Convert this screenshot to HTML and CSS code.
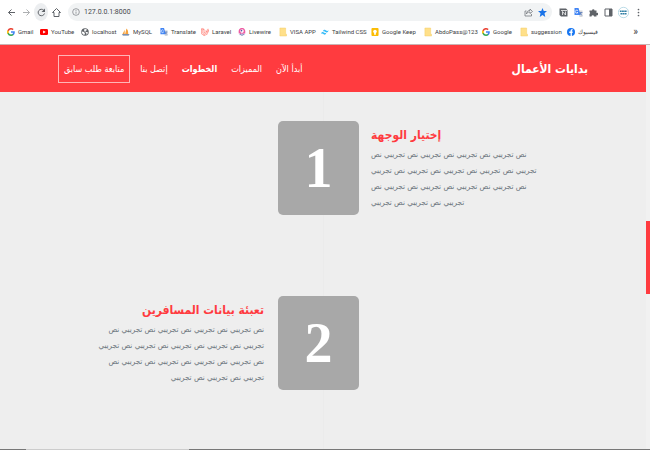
FILE: index.html
```html
<!DOCTYPE html>
<html lang="ar">
<head>
<meta charset="utf-8">
<title>بدايات الأعمال</title>
<link rel="stylesheet" href="styles.css">
</head>
<body>
<svg class="defs" aria-hidden="true">
  <symbol id="google" viewBox="0 0 18 18"><path fill="#4285f4" d="M17.6 9.2c0-.6-.1-1.200-.2-1.800H9v3.500h4.800a4.100 4.100 0 0 1-1.800 2.700v2.300h2.900c1.700-1.600 2.700-3.900 2.700-6.700z"/><path fill="#34a853" d="M9 18c2.400 0 4.500-.8 6-2.200l-3-2.300a5.400 5.400 0 0 1-8-2.800H1V13a9 9 0 0 0 8 5z"/><path fill="#fbbc05" d="M4 10.700a5.400 5.400 0 0 1 0-3.400V5H1a9 9 0 0 0 0 8z"/><path fill="#ea4335" d="M9 3.600c1.300 0 2.500.5 3.400 1.300L15 2.300A9 9 0 0 0 1 5l3 2.300a5.400 5.400 0 0 1 5-3.700z"/></symbol>
  <symbol id="folder" viewBox="0 0 18 18"><path fill="#ffe08a" stroke="#f3cb60" d="M2 0h13v14h2v4H2z"/></symbol>
  <symbol id="translate" viewBox="0 0 18 18"><path fill="#d5d8dc" d="M8 5h9v13h-6z"/><path fill="#4285f4" d="M1 0h8l4 14H1z"/><path fill="none" stroke="#fff" stroke-width="1.500" d="M8 5.500A3 3 0 1 0 8 9H6"/><path fill="none" stroke="#4a6fb5" stroke-width="1.300" d="M11 9h6M14 8v1c0 3-2 4-2 4m0-3 4 5"/></symbol>
</svg>
<header class="browser">
  <div class="toolbar">
    <button class="tool" aria-label="Back"><svg viewBox="0 0 18 18"><path class="line" d="M16 9H3m6-6L3 9l6 6"/></svg></button>
    <button class="tool faded" aria-label="Forward"><svg viewBox="0 0 18 18"><path class="line" d="M2 9h13M9 3l6 6-6 6"/></svg></button>
    <button class="tool reload" aria-label="Reload"><svg viewBox="0 0 18 18"><path class="line" d="M15 11a6.500 6.500 0 1 1-1.500-6.500L15 6"/><path d="M16 1v7H9z"/></svg></button>
    <button class="tool" aria-label="Home"><svg viewBox="0 0 18 18"><path class="line" d="M1 9l8-8 8 8h-3v8H4V9z"/></svg></button>
    <div class="address">
      <svg class="info" viewBox="0 0 18 18"><circle class="thin" cx="9" cy="9" r="7.500"/><path class="thin" d="M9 8v5M9 4.500v2"/></svg>
      <input class="url" aria-label="Address" value="127.0.0.1:8000" dir="ltr">
      <button class="tool" aria-label="Share"><svg viewBox="0 0 18 18"><path class="thin" d="M5 6H2v10h13v-4M5 12c0-5 3-7 7-7V2l5 5-5 4V8c-4 0-6 1-7 4z"/></svg></button>
      <button class="tool star" aria-label="Bookmark"><svg viewBox="0 0 18 18"><path d="M9 0l2.500 6H18l-5 4.500L14.500 18 9 14l-5.500 4L5 10.500 0 6h6.500z"/></svg></button>
    </div>
    <button class="tool ext" aria-label="Notion"><svg viewBox="0 0 18 18"><path d="M1 1h13l3 3v13H4l-3-3z"/><path fill="none" stroke="#fff" stroke-width="1.500" d="M4 5h12M7 14V7l6 7V7"/></svg></button>
    <button class="tool ext" aria-label="Translate"><svg><use href="#translate"/></svg></button>
    <button class="tool ext" aria-label="Extensions"><svg viewBox="0 0 18 18"><path d="M1 5h5a2.500 2.500 0 1 1 5 0h4v5a2.500 2.500 0 1 1 0 4v3h-5a2.500 2.500 0 0 0-5 0H1v-5a2.500 2.500 0 0 0 0-4z"/></svg></button>
    <button class="tool ext" aria-label="Side panel"><svg viewBox="0 0 18 18"><path fill="none" stroke="#5f6368" stroke-width="2" d="M2 2h14v14H2z"/><path d="M10 2h6v14h-6z"/></svg></button>
    <button class="tool ext profile" aria-label="Profile"><svg viewBox="0 0 18 18"><circle cx="9" cy="9" r="8.500" fill="#fff" stroke="#91c5d8"/><path fill="none" stroke="#2f7fa5" stroke-width="2.500" stroke-dasharray="3 .6" d="M3 7h12M4 11h10"/></svg></button>
    <button class="tool ext" aria-label="Menu"><svg viewBox="0 0 18 18"><circle cx="9" cy="3" r="1.700"/><circle cx="9" cy="9" r="1.700"/><circle cx="9" cy="15" r="1.700"/></svg></button>
  </div>
  <nav class="bookmarks" aria-label="Bookmarks">
    <a href="#"><svg><use href="#google"/></svg>Gmail</a>
    <a href="#"><svg viewBox="0 0 18 18"><rect y="2" width="18" height="14" rx="3" fill="#f00"/><path fill="#fff" d="M7 5.500l6 3.500-6 3.500z"/></svg>YouTube</a>
    <a href="#"><svg viewBox="0 0 18 18"><circle cx="9" cy="9" r="8.500" fill="#5f6368"/><path fill="#fff" d="M2 8l5 1 2 4-2 3c-4-2-5-5-5-8zm6-6l5 1-1 3-3 1 2 2 4 0c1 3-1 5-3 6l0-4-4-3-1-3z"/></svg>localhost</a>
    <a href="#"><svg viewBox="0 0 18 18"><path fill="#f6a13a" d="M1 14L6 4v10zm6 0L10 1c4 3 4 8 4 13z"/><path fill="#53719c" d="M0 14h17l-2 3H2z"/></svg>MySQL</a>
    <a href="#"><svg><use href="#translate"/></svg>Translate</a>
    <a href="#"><svg viewBox="0 0 18 18"><path fill="none" stroke="#ff6257" stroke-width="1.200" d="M1 2l3-1 3 2v8l7-4V4l2-2 2 2v4l-4 2v4l-7 3-6-4zm0 0l3 2 3-1M4 4v8l3 2 7-4m-7 4v3m3-11l4 2 4-3"/></svg>Laravel</a>
    <a href="#"><svg viewBox="0 0 18 18"><path fill="#ee5ba4" d="M2 13C0 3 4 0 9 0s9 4 7 13l-3-1-2 2-2-2-3 2-2-2z"/><circle cx="9" cy="7" r="4" fill="#fff"/><circle cx="8" cy="6" r="1.800" fill="#4e56a6"/><path stroke="#4e56a6" stroke-width="2" d="M5 13v3m4-3v5m4-5v3"/></svg>Livewire</a>
    <a href="#"><svg><use href="#folder"/></svg>VISA APP</a>
    <a href="#"><svg viewBox="0 0 18 18"><path fill="#38bdf8" d="M4 8c1-5 5-5 7-3 2 2 4 2 6 0-1 5-4 6-7 4-2-2-4-2-6-1zM0 13c1-5 4-5 7-3 2 2 3 2 5 0-1 5-4 6-6 4-2-2-4-2-6-1z"/></svg>Tailwind CSS</a>
    <a href="#"><svg viewBox="0 0 18 18"><rect x="1" width="16" height="18" rx="2" fill="#fbbc04"/><circle cx="9" cy="8" r="4" fill="#fff"/><path fill="#fff" d="M7 11h4v4H7z"/></svg>Google Keep</a>
    <a href="#"><svg><use href="#folder"/></svg>AbdoPass@123</a>
    <a href="#"><svg><use href="#google"/></svg>Google</a>
    <a href="#"><svg><use href="#folder"/></svg>suggession</a>
    <a href="#"><svg viewBox="0 0 18 18"><circle cx="9" cy="9" r="9" fill="#1877f2"/><path fill="#fff" d="M8 18v-7H5V8h3V6c0-3 2-4 5-3v2c-2 0-2 0-2 3h2l-.5 3H11v7z"/></svg>فيسبوك</a>
    <button class="more" aria-label="More bookmarks">»</button>
  </nav>
</header>
<div class="viewport">
  <div class="page" dir="rtl">
    <header class="navbar">
      <a class="brand" href="#">بدايات الأعمال</a>
      <nav class="menu">
        <a href="#">أبدأ الآن</a>
        <a href="#">المميزات</a>
        <a class="active" href="#">الخطوات</a>
        <a href="#">إتصل بنا</a>
        <a class="outlined" href="#">متابعة طلب سابق</a>
      </nav>
    </header>
    <main class="steps">
      <section class="step first">
        <div class="number">1</div>
        <div class="copy">
          <h2>إختيار الوجهة</h2>
          <p>نص تجريبي نص تجريبي نص تجريبي نص تجريبي نص<br>تجريبي نص تجريبي نص تجريبي نص تجريبي نص تجريبي<br>نص تجريبي نص تجريبي نص تجريبي نص تجريبي نص<br>تجريبي نص تجريبي نص تجريبي</p>
        </div>
      </section>
      <section class="step second">
        <div class="number">2</div>
        <div class="copy">
          <h2>تعبئة بيانات المسافرين</h2>
          <p>نص تجريبي نص تجريبي نص تجريبي نص تجريبي نص<br>تجريبي نص تجريبي نص تجريبي نص تجريبي نص تجريبي<br>نص تجريبي نص تجريبي نص تجريبي نص تجريبي نص<br>تجريبي نص تجريبي نص تجريبي</p>
        </div>
      </section>
    </main>
  </div>
  <div class="scrollbar"><div class="thumb"></div></div>
</div>
<footer class="taskbar"><span></span></footer>
</body>
</html>
```
FILE: styles.css
```css
* { box-sizing: border-box; }
body {
  margin: 0;
  min-height: 100vh;
  display: flex;
  flex-direction: column;
  background: #eee;
  font-family: "DejaVu Sans Condensed", "DejaVu Sans", sans-serif;
}
a { color: inherit; text-decoration: none; }
button { border: 0; padding: 0; background: none; font: inherit; color: inherit; }
.defs { position: absolute; width: 0; height: 0; }
.browser {
  direction: ltr;
  background: #fff;
  border-bottom: 1px solid #c9b3b3;
  font-family: Roboto, "DejaVu Sans", sans-serif;
  color: #5f6368;
}
.toolbar { display: flex; align-items: center; height: 24px; padding: 0 5px 0 4px; gap: 1px; }
.tool { display: grid; place-items: center; width: 14px; height: 18px; flex: none; }
.tool svg { width: 9px; height: 11px; fill: #5f6368; }
.tool .line { fill: none; stroke: #5f6368; stroke-width: 2; }
.thin { fill: none; stroke: #6f7378; stroke-width: 1.5; }
.faded { opacity: .5; }
.reload { background: #eceef0; border-radius: 50%; }
.address {
  flex: 1;
  display: flex;
  align-items: center;
  height: 18px;
  margin: 0 3px 0 4px;
  padding: 0 3px 0 4px;
  background: #f1f3f4;
  border-radius: 9px;
}
.info { width: 8px; height: 10px; flex: none; }
.url {
  flex: 1;
  min-width: 0;
  border: 0;
  padding: 0 0 0 4px;
  background: none;
  color: #44474b;
  font: 7px Roboto, sans-serif;
}
.star svg { fill: #1a73e8; }
.profile svg { width: 11px; height: 13px; }
.bookmarks {
  display: grid;
  grid-template-columns: 33px 41px 41px 38px 41px 37px 41px 42px 50px 53px 58px 38px 47px 1fr auto;
  align-items: center;
  height: 20px;
  padding: 0 12px 4px 7px;
  font-size: 6px;
  line-height: 12px;
  color: #3c4043;
}
.bookmarks a { display: flex; align-items: center; gap: 3px; white-space: nowrap; }
.bookmarks svg { width: 8px; height: 10px; flex: none; }
.more { font-size: 10px; }
.viewport { flex: 1; display: flex; }
.page { flex: 1; display: flex; flex-direction: column; }
.navbar {
  display: flex;
  align-items: center;
  justify-content: space-between;
  height: 47px;
  padding: 0 58px;
  background: #ff3b3f;
  color: #fff;
}
.brand { font-size: 12px; font-weight: bold; }
.menu { display: flex; align-items: center; gap: 14px; font-size: 9px; line-height: 16px; }
.menu a { white-space: nowrap; }
.menu .active { font-weight: bold; }
.menu .outlined { border: 1px solid #ffb5b7; padding: 5px; margin-right: -4px; }
.steps {
  flex: 1;
  display: flex;
  flex-direction: column;
  gap: 81px;
  padding-top: 29px;
  background: linear-gradient(#ebebeb, #ebebeb) center / 1px 100% no-repeat;
}
.step {
  direction: ltr;
  display: grid;
  grid-template-columns: 278fr 81px 287fr;
}
.number {
  grid-column: 2;
  grid-row: 1;
  border-radius: 5px;
  background: #a8a8a8;
  color: #fff;
  font: bold 56px "Liberation Serif", serif;
  line-height: 94px;
  text-align: center;
}
.copy { grid-row: 1; direction: rtl; padding: 2px 12px 0; }
.first .copy { grid-column: 3; justify-self: start; text-align: left; }
.second .copy { grid-column: 1; justify-self: end; padding-right: 14px; }
h2 { margin: 0; font-size: 12px; line-height: 24px; color: #ff3b3f; }
.copy p { margin: 0; font-size: 8px; line-height: 16px; color: #6c757d; white-space: nowrap; }
.scrollbar { width: 4px; padding-top: 176px; background: #f1f1f1; }
.thumb { height: 73px; background: #ff3b3f; }
.taskbar { height: 1px; display: flex; background: #777; }
.taskbar span { width: 25%; margin-left: 4%; background: #ccc; }
```
